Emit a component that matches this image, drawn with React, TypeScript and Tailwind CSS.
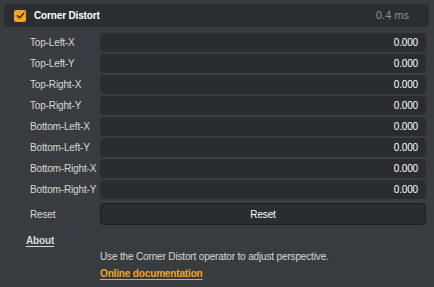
import React from 'react';

const fields = [
  'Top-Left-X',
  'Top-Left-Y',
  'Top-Right-X',
  'Top-Right-Y',
  'Bottom-Left-X',
  'Bottom-Left-Y',
  'Bottom-Right-X',
  'Bottom-Right-Y',
];

export default function App() {
  return (
    <div
      className="w-[434px] h-[287px] bg-[#383c3f] overflow-hidden text-[10px] leading-[13px] tracking-[-0.15px] text-[#d9d9d9]"
      style={{ fontFamily: '"Liberation Sans", Arial, sans-serif' }}
    >
      {/* Header */}
      <div className="pt-[4px] pl-[4px] pr-[5px]">
        <div className="h-[23px] rounded-[4px] bg-[#2b2e30] flex items-center pl-[10px] pr-[20px]">
          <div className="w-[12px] h-[12px] rounded-[2px] bg-[#f5a425] flex items-center justify-center">
            <svg width="9" height="9" viewBox="0 0 10 10" fill="none">
              <path d="M1.5 5.2 L4 7.6 L8.6 2.4" stroke="#2b2e30" strokeWidth="1.6" strokeLinecap="round" strokeLinejoin="round" />
            </svg>
          </div>
          <span className="ml-[8px] font-bold text-white">Corner Distort</span>
          <span className="ml-auto text-[#8d9194] text-[11px] tracking-normal">0.4 ms</span>
        </div>
      </div>

      {/* Fields */}
      <div className="mt-[6px] flex flex-col gap-[2px] pl-[30px] pr-[8px]">
        {fields.map((f) => (
          <div key={f} className="flex items-center">
            <span className="w-[70px] shrink-0 whitespace-nowrap">{f}</span>
            <div className="flex-1 h-[19px] rounded-[4px] bg-[#2a2d2f] flex items-center justify-end pr-[8px] text-white">
              0.000
            </div>
          </div>
        ))}
        <div className="flex items-center mt-[2px]">
          <span className="w-[70px] shrink-0">Reset</span>
          <div className="flex-1 h-[22px] rounded-[4px] bg-[#2a2d2f] border-[1.5px] border-[#1c1e20] flex items-center justify-center text-white">
            Reset
          </div>
        </div>
      </div>

      {/* About */}
      <div className="mt-[9px] pl-[26px]">
        <span className="font-bold underline underline-offset-2">About</span>
      </div>
      <div className="mt-[3px] pl-[100px]">Use the Corner Distort operator to adjust perspective.</div>
      <div className="mt-[4px] pl-[100px]">
        <span className="font-bold text-[#f5a425] underline underline-offset-2">Online documentation</span>
      </div>
    </div>
  );
}
